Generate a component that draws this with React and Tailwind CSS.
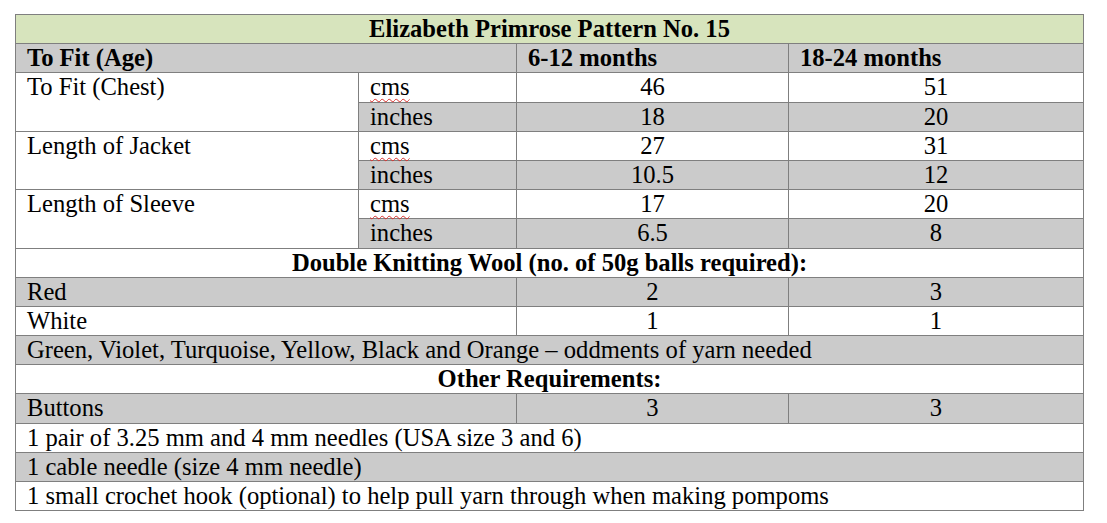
const sizes = [
  { label: "To Fit (Chest)", cms: ["46", "51"], inches: ["18", "20"] },
  { label: "Length of Jacket", cms: ["27", "31"], inches: ["10.5", "12"] },
  { label: "Length of Sleeve", cms: ["17", "20"], inches: ["6.5", "8"] },
];

const cell = "border border-[#7f7f7f] h-[29.2px] p-0 px-[11px] align-top leading-[28px] whitespace-nowrap font-['Liberation_Serif','Times_New_Roman',serif]";
const gray = "bg-[#cbcbcb]";

export default function App() {
  return (
    <div className="min-h-screen bg-white pl-[15px] pt-[14px] text-black text-[24.6px] font-['Liberation_Serif','Times_New_Roman',serif]">
      <table className="table-fixed border-collapse w-[1068px] font-['Liberation_Serif','Times_New_Roman',serif]">
        <colgroup>
          <col className="w-[343px]" />
          <col className="w-[158px]" />
          <col className="w-[272px]" />
          <col className="w-[295px]" />
        </colgroup>
        <tbody>
          {/* TITLE */}
          <tr>
            <td colSpan={4} className={`${cell} bg-[#d7e4bd] text-center font-bold`}>
              Elizabeth Primrose Pattern No. 15
            </td>
          </tr>

          {/* HEADER */}
          <tr className={gray}>
            <td colSpan={2} className={`${cell} font-bold`}>To Fit (Age)</td>
            <td className={`${cell} font-bold`}>6-12 months</td>
            <td className={`${cell} font-bold`}>18-24 months</td>
          </tr>

          {/* MEDIDAS */}
          {sizes.map((s) => [
            <tr key={s.label + "-cms"}>
              <td rowSpan={2} className={`${cell} bg-white`}>{s.label}</td>
              <td className={cell}>
                <span className="underline decoration-wavy decoration-[#d9302c] decoration-1 underline-offset-[3px]">
                  cms
                </span>
              </td>
              <td className={`${cell} text-center`}>{s.cms[0]}</td>
              <td className={`${cell} text-center`}>{s.cms[1]}</td>
            </tr>,
            <tr key={s.label + "-in"}>
              <td className={`${cell} ${gray}`}>inches</td>
              <td className={`${cell} ${gray} text-center`}>{s.inches[0]}</td>
              <td className={`${cell} ${gray} text-center`}>{s.inches[1]}</td>
            </tr>,
          ])}

          {/* LANA */}
          <tr>
            <td colSpan={4} className={`${cell} text-center font-bold`}>
              Double Knitting Wool (no. of 50g balls required):
            </td>
          </tr>
          <tr className={gray}>
            <td colSpan={2} className={cell}>Red</td>
            <td className={`${cell} text-center`}>2</td>
            <td className={`${cell} text-center`}>3</td>
          </tr>
          <tr>
            <td colSpan={2} className={cell}>White</td>
            <td className={`${cell} text-center`}>1</td>
            <td className={`${cell} text-center`}>1</td>
          </tr>
          <tr className={gray}>
            <td colSpan={4} className={cell}>
              Green, Violet, Turquoise, Yellow, Black and Orange – oddments of yarn needed
            </td>
          </tr>

          {/* OTROS */}
          <tr>
            <td colSpan={4} className={`${cell} text-center font-bold`}>Other Requirements:</td>
          </tr>
          <tr className={gray}>
            <td colSpan={2} className={cell}>Buttons</td>
            <td className={`${cell} text-center`}>3</td>
            <td className={`${cell} text-center`}>3</td>
          </tr>
          <tr>
            <td colSpan={4} className={cell}>1 pair of 3.25 mm and 4 mm needles (USA size 3 and 6)</td>
          </tr>
          <tr className={gray}>
            <td colSpan={4} className={cell}>1 cable needle (size 4 mm needle)</td>
          </tr>
          <tr>
            <td colSpan={4} className={cell}>
              1 small crochet hook (optional) to help pull yarn through when making pompoms
            </td>
          </tr>
        </tbody>
      </table>
    </div>
  );
}
